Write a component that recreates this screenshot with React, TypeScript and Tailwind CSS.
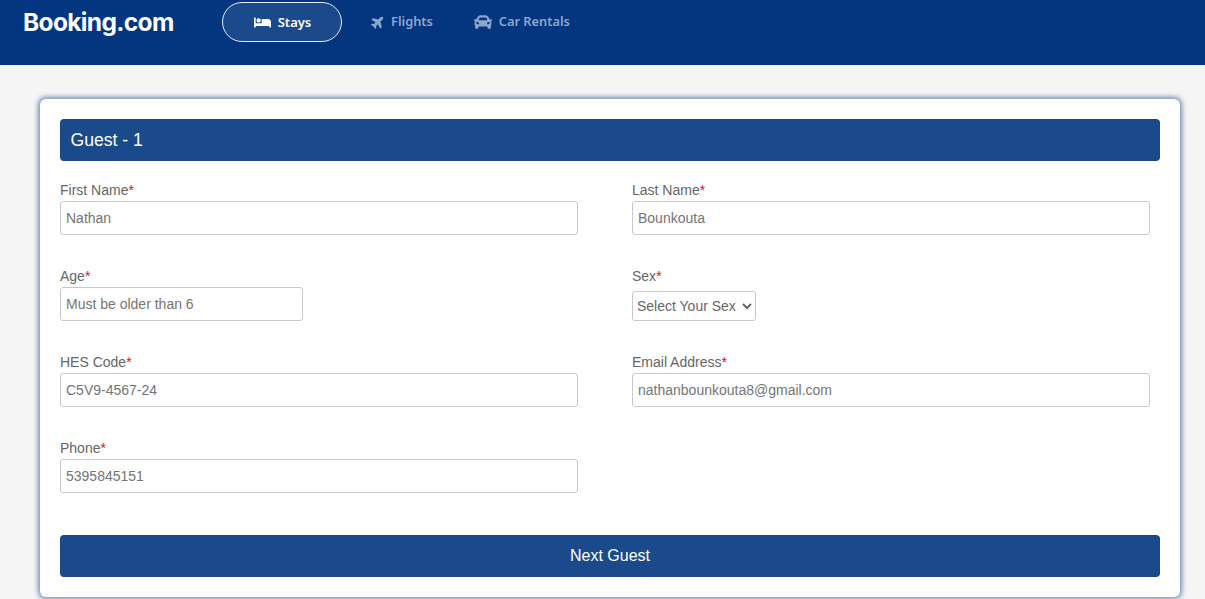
import { FaBed, FaCar, FaPlane } from "react-icons/fa";

const Field = ({
  label,
  value,
  placeholder,
  inputClass = "w-full",
}: {
  label: string;
  value?: string;
  placeholder?: string;
  inputClass?: string;
}) => (
  <div className="h-[86px]">
    <label className="block h-[21px] text-[14px] leading-[20px] text-[#666666]">
      {label}
      <span className="text-[#f5002d]">*</span>
    </label>
    <input
      readOnly
      defaultValue={value}
      placeholder={placeholder}
      className={`${inputClass} block h-[34px] rounded-[3px] border border-[#c8c8c8] bg-white px-[5px] text-[14px] text-[#757575] placeholder:text-[#757575] outline-none`}
    />
  </div>
);

export default function App() {
  return (
    <div className="min-h-[599px] overflow-hidden bg-[#f5f5f5] font-['Liberation_Sans',Arial,sans-serif]">
      <header className="flex h-[65px] items-start bg-[#03367f] pl-[23px] font-['Noto_Sans',sans-serif]">
        <div className="mt-[5px] w-[199px] font-['Inter',sans-serif] text-[24.5px] font-bold leading-[34px] tracking-[-0.65px] text-white">
          Booking.com
        </div>
        <nav className="mt-[2px] flex items-start">
          <a className="flex h-[40px] w-[120px] items-center justify-center gap-[7px] rounded-[20px] border border-[#e6ebf3] bg-[#1a4a8c] pt-[1px] pl-[1px] text-[13px] font-semibold text-white">
            <FaBed className="text-[17px]" />
            Stays
          </a>
          <a className="ml-[29px] flex h-[39px] items-center gap-[6px] text-[12.8px] font-semibold text-[#8ea6cc]">
            <FaPlane className="-rotate-45 text-[14px]" />
            Flights
          </a>
          <a className="ml-[41px] flex h-[39px] items-center gap-[7px] text-[12.8px] font-semibold text-[#8ea6cc]">
            <FaCar className="text-[18px]" />
            Car Rentals
          </a>
        </nav>
      </header>
      <main className="mt-[34px] ml-[40px] h-[498px] w-[1140px] rounded-[6px] bg-white p-[20px] shadow-[0_0_5px_2px_rgba(26,74,140,0.6)]">
        <h2 className="flex h-[42px] items-center rounded-[4px] bg-[#1a4a8c] pl-[10.5px] text-[17.6px] font-normal text-white">
          Guest - 1
        </h2>
        <div className="mt-[19px] grid grid-cols-[518px_518px] gap-x-[54px]">
          <Field label="First Name" value="Nathan" />
          <Field label="Last Name" value="Bounkouta" />
          <Field label="Age" placeholder="Must be older than 6" inputClass="w-[243px]" />
          <div className="h-[86px]">
            <label className="block h-[21px] text-[14px] leading-[20px] text-[#666666]">
              Sex<span className="text-[#f5002d]">*</span>
            </label>
            <select
              defaultValue=""
              className="mt-[4px] block h-[30px] w-[124px] rounded-[3px] border border-[#c8c8c8] bg-white text-[14px] text-[#666666] outline-none"
            >
              <option value="">Select Your Sex</option>
            </select>
          </div>
          <Field label="HES Code" value="C5V9-4567-24" />
          <Field label="Email Address" value="nathanbounkouta8@gmail.com" />
          <Field label="Phone" value="5395845151" />
        </div>
        <button className="mt-[11px] block h-[42px] w-full rounded-[4px] bg-[#1a4a8c] text-[16px] text-white">
          Next Guest
        </button>
      </main>
    </div>
  );
}
